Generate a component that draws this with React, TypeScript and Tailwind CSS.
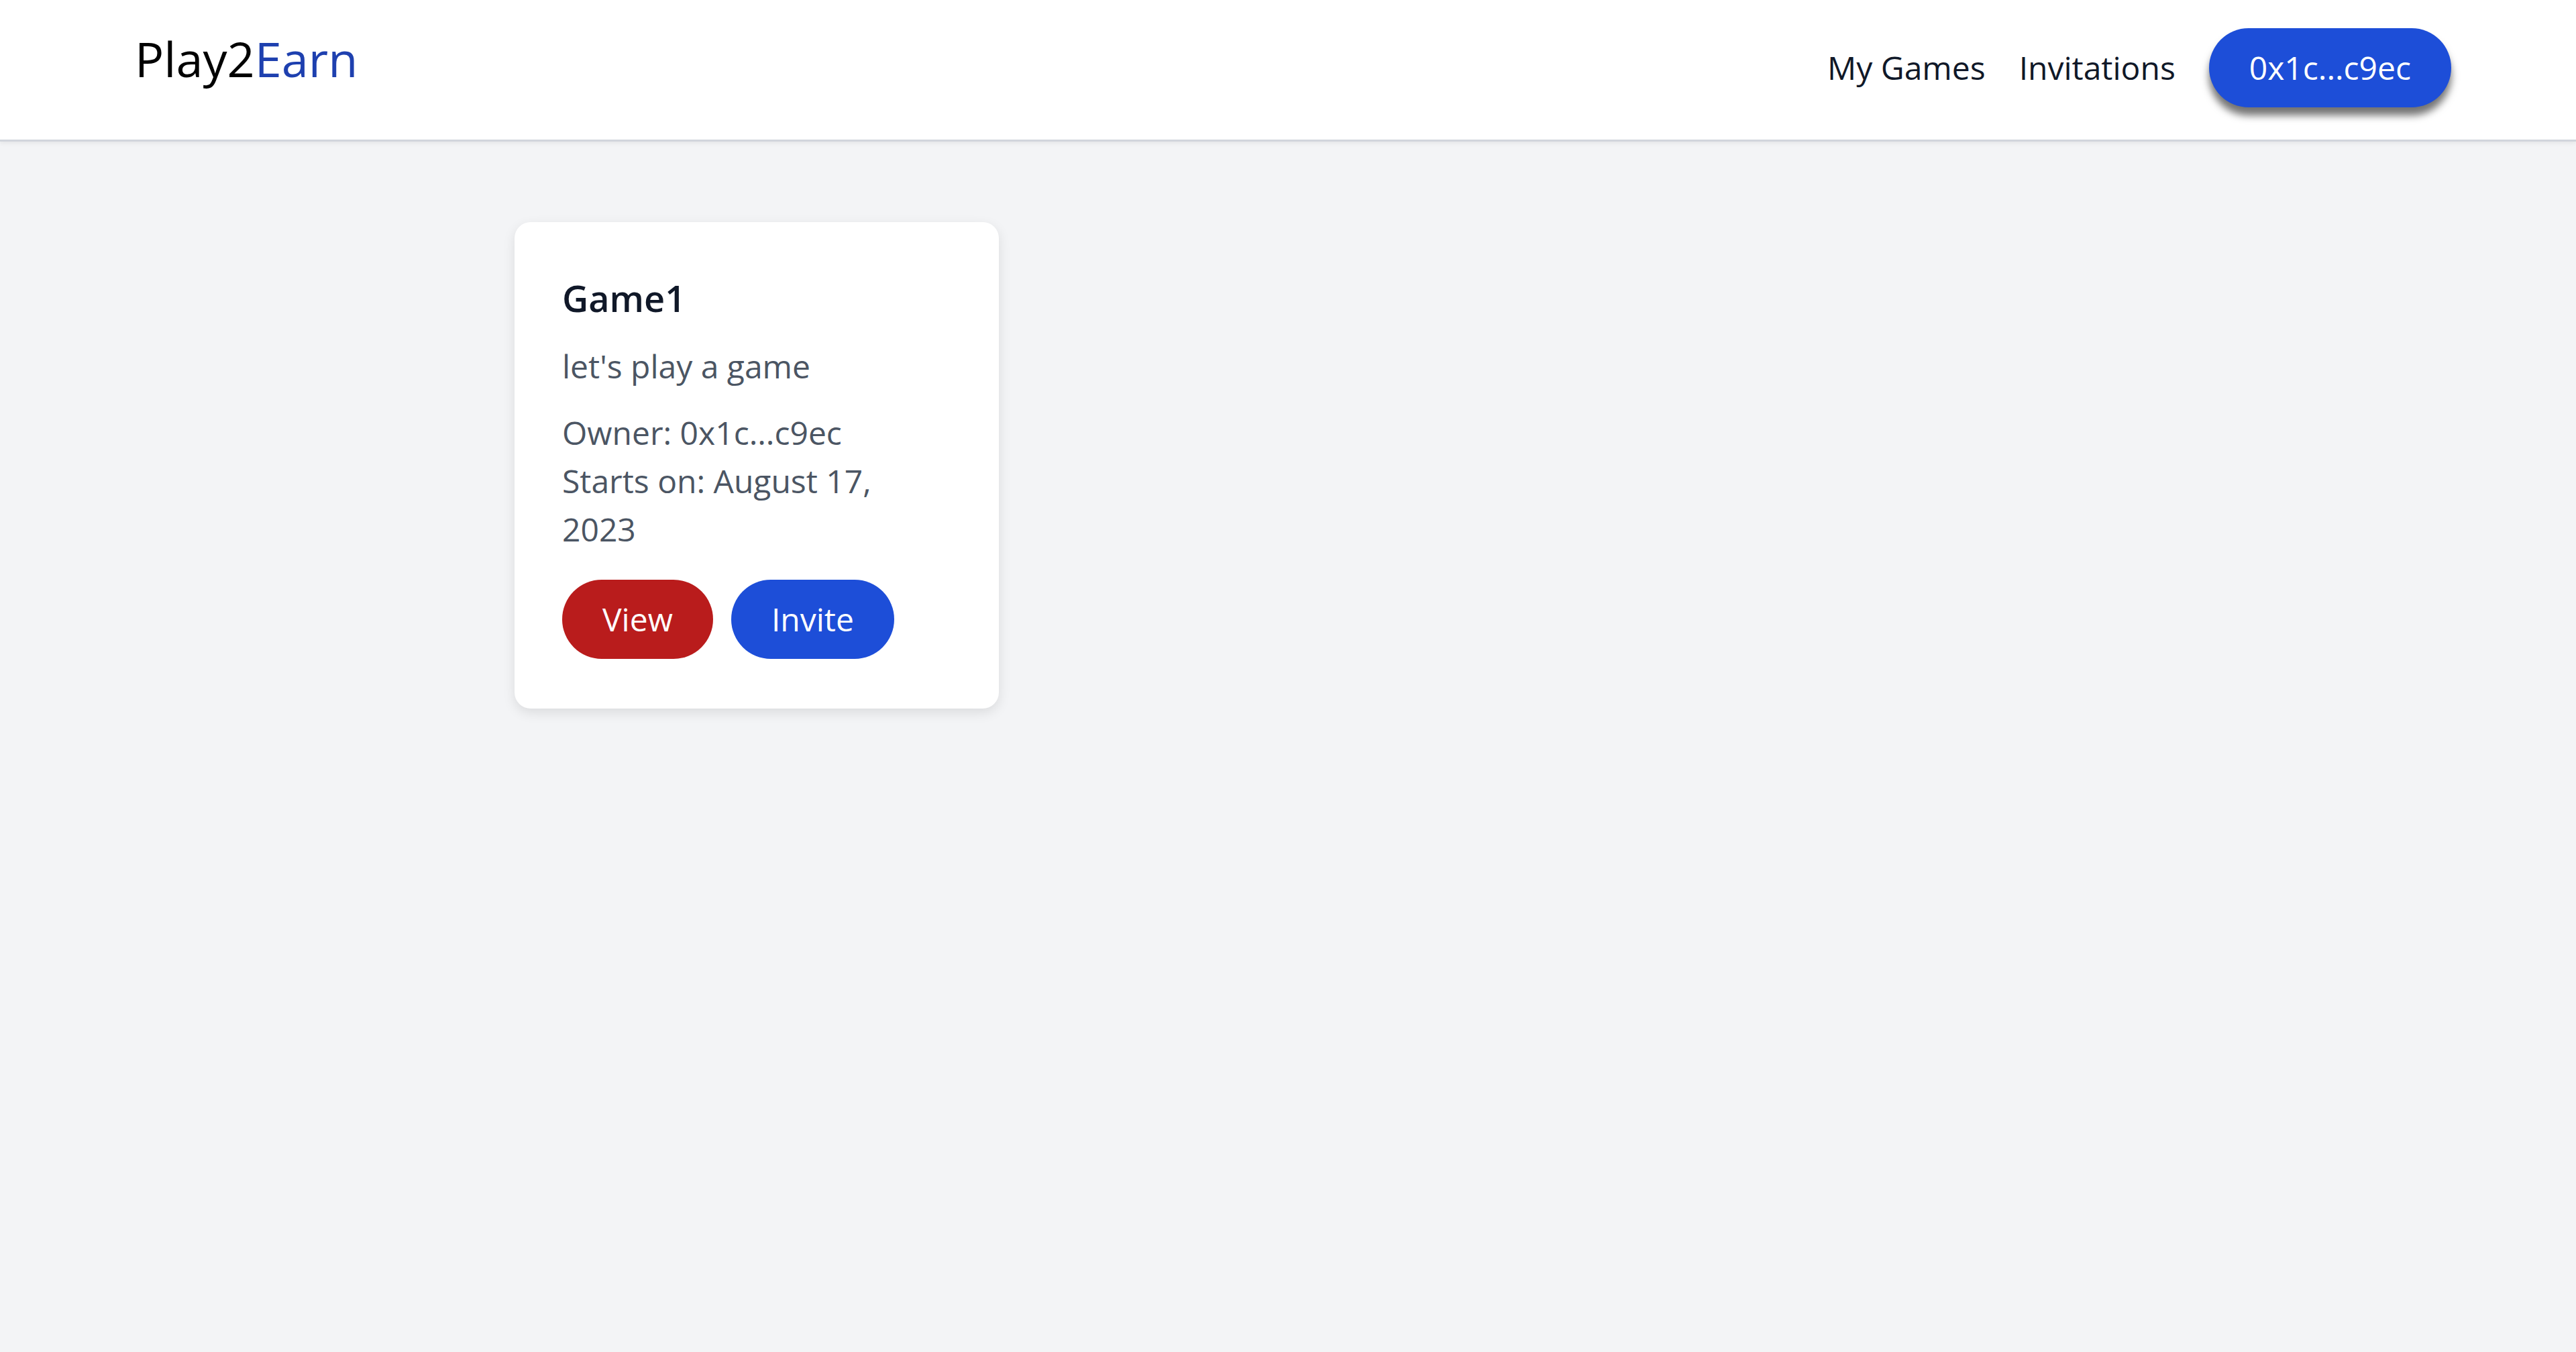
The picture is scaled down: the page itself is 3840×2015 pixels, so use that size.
export default function App() {
  return (
    <div className="min-h-screen bg-[#f3f4f6] font-['Open_Sans',sans-serif]">
      {/* header */}
      <header className="h-[211px] bg-white border-b-[3px] border-gray-300 shadow-[0_3px_6px_rgba(0,0,0,0.06)] flex items-center justify-between pl-[201px] pr-[186px]">
        <a className="text-[72px] leading-none text-black mb-[34px]">
          Play2<span className="text-[#1e40af]">Earn</span>
        </a>
        <nav className="flex items-center gap-[50px] text-[48px] text-gray-900 mb-[6px]">
          <a>My Games</a>
          <a>Invitations</a>
          <button className="h-[118px] px-[60px] rounded-full bg-[#1d4ed8] text-white shadow-[0_12px_12px_rgba(0,0,0,0.55)]">
            0x1c...c9ec
          </button>
        </nav>
      </header>

      {/* games */}
      <main className="pt-[120px] pl-[767px]">
        <div className="w-[722px] bg-white rounded-[24px] shadow-[0_6px_18px_rgba(0,0,0,0.1)] px-[71px] pt-[77px] pb-[74px]">
          <h3 className="text-[54px] leading-[72px] font-semibold text-gray-900">Game1</h3>
          <p className="mt-[30px] text-[48px] leading-[72px] text-[#4b5563]">let's play a game</p>
          <p className="mt-[27px] text-[48px] leading-[72px] text-[#4b5563]">Owner: 0x1c...c9ec</p>
          <p className="text-[48px] leading-[72px] text-[#4b5563]">Starts on: August 17, 2023</p>
          <div className="mt-[39px] flex gap-[27px]">
            <button className="h-[118px] px-[60px] rounded-full bg-[#b91c1c] text-white text-[48px]">View</button>
            <button className="h-[118px] px-[60px] rounded-full bg-[#1d4ed8] text-white text-[48px]">Invite</button>
          </div>
        </div>
      </main>
    </div>
  );
}
